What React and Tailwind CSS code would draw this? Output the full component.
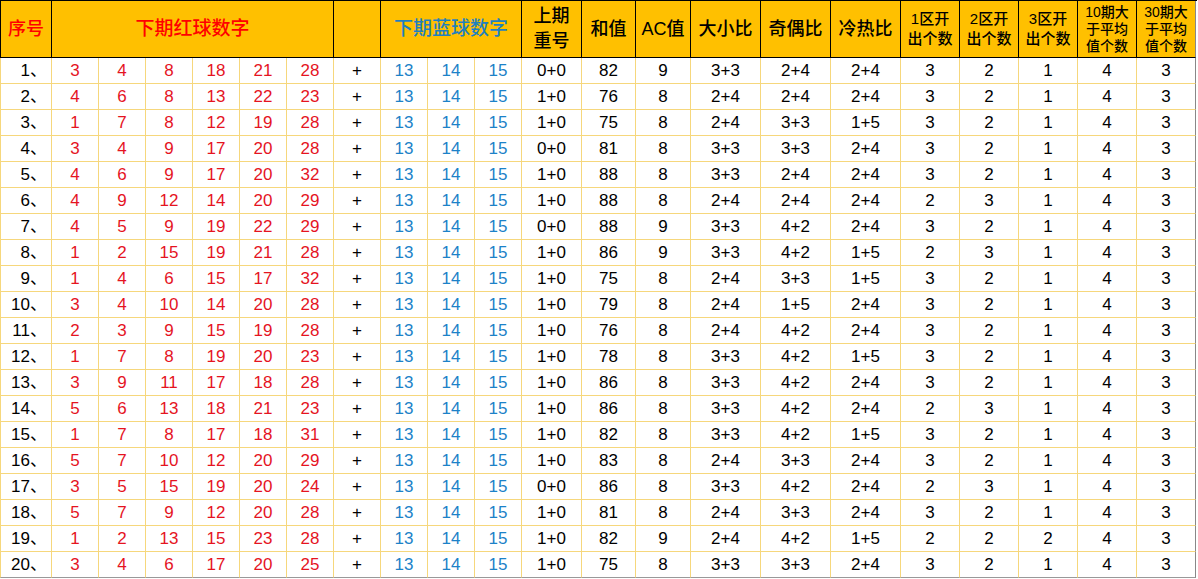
import React from "react";

const rows = [
  [[3,4,8,18,21,28],"0+0",82,9,"3+3","2+4","2+4",3,2,1,4,3],
  [[4,6,8,13,22,23],"1+0",76,8,"2+4","2+4","2+4",3,2,1,4,3],
  [[1,7,8,12,19,28],"1+0",75,8,"2+4","3+3","1+5",3,2,1,4,3],
  [[3,4,9,17,20,28],"0+0",81,8,"3+3","3+3","2+4",3,2,1,4,3],
  [[4,6,9,17,20,32],"1+0",88,8,"3+3","2+4","2+4",3,2,1,4,3],
  [[4,9,12,14,20,29],"1+0",88,8,"2+4","2+4","2+4",2,3,1,4,3],
  [[4,5,9,19,22,29],"0+0",88,9,"3+3","4+2","2+4",3,2,1,4,3],
  [[1,2,15,19,21,28],"1+0",86,9,"3+3","4+2","1+5",2,3,1,4,3],
  [[1,4,6,15,17,32],"1+0",75,8,"2+4","3+3","1+5",3,2,1,4,3],
  [[3,4,10,14,20,28],"1+0",79,8,"2+4","1+5","2+4",3,2,1,4,3],
  [[2,3,9,15,19,28],"1+0",76,8,"2+4","4+2","2+4",3,2,1,4,3],
  [[1,7,8,19,20,23],"1+0",78,8,"3+3","4+2","1+5",3,2,1,4,3],
  [[3,9,11,17,18,28],"1+0",86,8,"3+3","4+2","2+4",3,2,1,4,3],
  [[5,6,13,18,21,23],"1+0",86,8,"3+3","4+2","2+4",2,3,1,4,3],
  [[1,7,8,17,18,31],"1+0",82,8,"3+3","4+2","1+5",3,2,1,4,3],
  [[5,7,10,12,20,29],"1+0",83,8,"2+4","3+3","2+4",3,2,1,4,3],
  [[3,5,15,19,20,24],"0+0",86,8,"3+3","4+2","2+4",2,3,1,4,3],
  [[5,7,9,12,20,28],"1+0",81,8,"2+4","3+3","2+4",3,2,1,4,3],
  [[1,2,13,15,23,28],"1+0",82,9,"2+4","4+2","1+5",2,2,2,4,3],
  [[3,4,6,17,20,25],"1+0",75,8,"3+3","3+3","2+4",3,2,1,4,3],
];

const FONT = { fontFamily: '"Liberation Sans", "Noto Sans CJK SC", sans-serif' };

function H({ children, cls = "" }) {
  return (
    <div className={`h-[57px] border-r border-b border-black bg-[#FFC000] flex flex-col items-center justify-center text-center font-medium ${cls}`}>
      {children}
    </div>
  );
}

function C({ children, cls = "" }) {
  return (
    <div className={`h-[26px] border-r border-b border-[#F6D77C] bg-white flex items-center text-[17px] ${cls}`}>
      {children}
    </div>
  );
}

export default function App() {
  return (
    <div className="w-[1198px] h-[579px] bg-white" style={FONT}>
      <div className="grid grid-cols-[52px_47px_47px_47px_47px_47px_47px_47px_47px_47px_47px_60px_54px_55px_70px_70px_70px_59px_59px_59px_59px_59px] border-t border-black w-[1197px]">
        <H cls="border-l text-[18px] text-[#FF0000]">序号</H>
        <H cls="col-span-6 text-[19px] text-[#FF0000]">下期红球数字</H>
        <H cls="text-black"></H>
        <H cls="col-span-3 text-[19px] text-[#1F80BF]">下期蓝球数字</H>
        <H cls="text-[18px] leading-[25px] text-black"><span>上期</span><span>重号</span></H>
        <H cls="text-[18px] text-black">和值</H>
        <H cls="text-[18px] text-black">AC值</H>
        <H cls="text-[18px] text-black">大小比</H>
        <H cls="text-[18px] text-black">奇偶比</H>
        <H cls="text-[18px] text-black">冷热比</H>
        <H cls="text-[15px] leading-[20px] text-black"><span>1区开</span><span>出个数</span></H>
        <H cls="text-[15px] leading-[20px] text-black"><span>2区开</span><span>出个数</span></H>
        <H cls="text-[15px] leading-[20px] text-black"><span>3区开</span><span>出个数</span></H>
        <H cls="text-[14px] leading-[17px] text-black"><span>10期大</span><span>于平均</span><span>值个数</span></H>
        <H cls="text-[14px] leading-[17px] text-black border-r-[#888]"><span>30期大</span><span>于平均</span><span>值个数</span></H>
        {rows.map((r, i) => {
          const last = i === rows.length - 1;
          const b = last ? "border-b-[#999]" : "";
          return (
            <React.Fragment key={i}>
              <C cls={`border-l justify-end pr-[4px] text-black ${b}`}>{i + 1}、</C>
              {r[0].map((n, j) => (
                <C key={j} cls={`justify-center text-[#E5141F] ${b}`}>{n}</C>
              ))}
              <C cls={`justify-center text-black ${b}`}>+</C>
              <C cls={`justify-center text-[#1C82C8] ${b}`}>13</C>
              <C cls={`justify-center text-[#1C82C8] ${b}`}>14</C>
              <C cls={`justify-center text-[#1C82C8] ${b}`}>15</C>
              {r.slice(1).map((v, j) => (
                <C key={"v" + j} cls={`justify-center text-black ${b} ${j === 10 ? "border-r-[#888]" : ""}`}>{v}</C>
              ))}
            </React.Fragment>
          );
        })}
      </div>
    </div>
  );
}
